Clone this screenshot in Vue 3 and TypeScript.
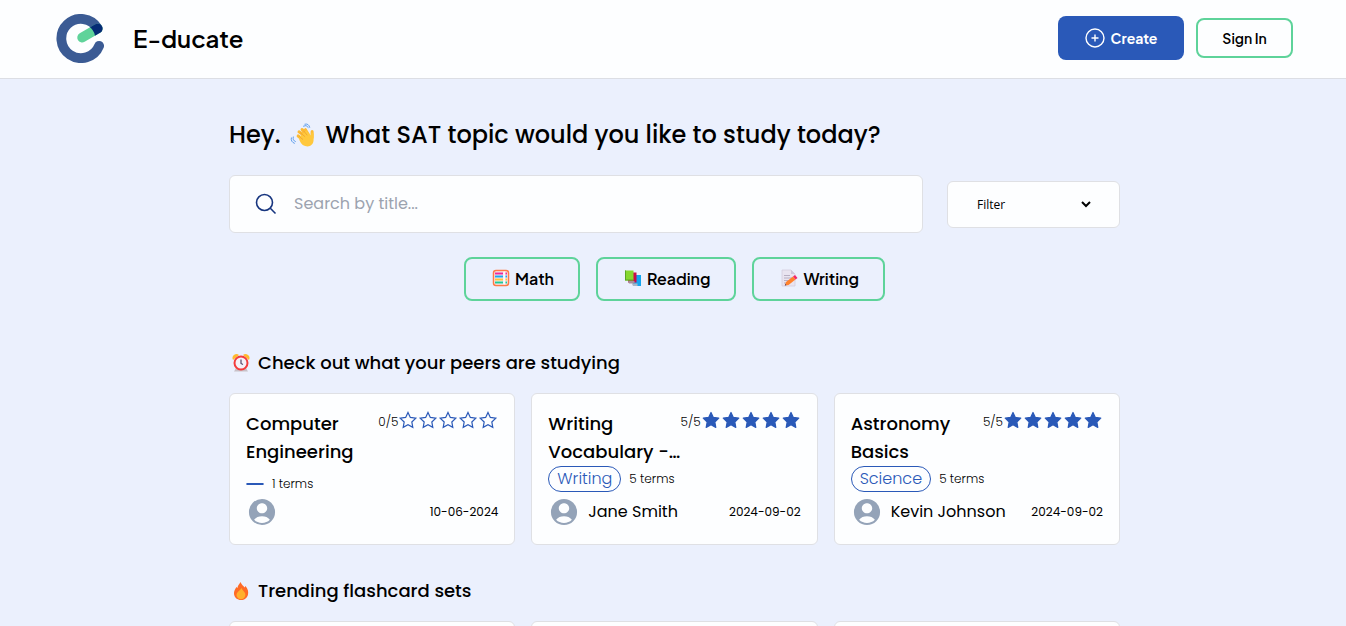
<script setup lang="ts">
import { ref } from 'vue'

interface StudySet {
  title: string
  rating: number
  subject: string
  terms: number
  author: string
  date: string
}

const query = ref('')
const filter = ref('Filter')
const topics = ['Math', 'Reading', 'Writing']

const peerSets: StudySet[] = [
  { title: 'Computer\nEngineering', rating: 0, subject: '', terms: 1, author: '', date: '10-06-2024' },
  { title: 'Writing\nVocabulary -…', rating: 5, subject: 'Writing', terms: 5, author: 'Jane Smith', date: '2024-09-02' },
  { title: 'Astronomy\nBasics', rating: 5, subject: 'Science', terms: 5, author: 'Kevin Johnson', date: '2024-09-02' },
]
</script>

<template>
  <div class="page">
    <header class="header">
      <a class="brand" href="#">
        <svg class="logo" viewBox="0 0 50 50" aria-hidden="true">
          <defs>
            <clipPath id="ring-area">
              <path clip-rule="evenodd" d="M0 0H50V50H0ZM25 10a15 15 0 1 0 0 30a15 15 0 1 0 0-30Z" />
            </clipPath>
          </defs>
          <path d="M42.500 14.500A20 20 0 1 0 44 32.500" fill="none" stroke="#3b5b94" stroke-width="10" stroke-linecap="round" />
          <path d="M26.700 24L42.500 14.900" stroke="#5fd39a" stroke-width="10" stroke-linecap="round" />
          <path d="M26.700 24L42.500 14.900" stroke="#052b75" stroke-width="10" stroke-linecap="round" clip-path="url(#ring-area)" />
        </svg>
        <span>E-ducate</span>
      </a>
      <nav class="actions">
        <button class="create" type="button">
          <svg viewBox="0 0 20 20" aria-hidden="true">
            <circle cx="10" cy="10" r="9" />
            <path d="M10 6.500v7M6.500 10h7" />
          </svg>
          Create
        </button>
        <button class="sign-in" type="button">Sign In</button>
      </nav>
    </header>

    <main class="main">
      <h1 class="greeting">
        <span>Hey.</span>
        <svg viewBox="0 0 26 26" aria-hidden="true">
          <g fill="none" stroke="#5b9bea" stroke-width="1" stroke-linecap="round">
            <path d="M14 3.200q3-2 5 1.300M15.500 1.200q4-1 5 3.300M3.400 14.500q-1 3.600 2.200 4.800M1.400 15.500q-1 4 3.200 5.600" />
          </g>
          <g stroke="#fdbb35" stroke-width="3.200" stroke-linecap="round">
            <path d="M16 14L9.400 9.200M17 12L12.600 6.800M19 12L16 7M13 17L8.500 13.500M23 15V9" />
          </g>
          <path d="M9 15L17 7.500l4.500 5.400 1-3.500 2 1.400v7.500c-.4 4.700-4.500 7.300-8.800 5.700-3.600-1.200-5.700-4.500-6.700-9Z" fill="#ffc83d" />
          <path d="M10.500 10l5.200 4.300M14 8l4 4.800M9.500 14l4 3.200" stroke="#e8982b" stroke-width=".7" />
        </svg>
        <span>What SAT topic would you like to study today?</span>
      </h1>

      <form class="search-row" @submit.prevent>
        <label class="search">
          <svg viewBox="0 0 22 22" aria-hidden="true">
            <circle cx="9.500" cy="9.500" r="8" />
            <path d="M15.300 15.300L20.500 20.500" />
          </svg>
          <input v-model="query" type="text" placeholder="Search by title..." aria-label="Search by title" />
        </label>
        <label class="filter">
          <select v-model="filter" aria-label="Filter">
            <option>Filter</option>
            <option>Math</option>
            <option>Reading</option>
            <option>Writing</option>
          </select>
          <svg viewBox="0 0 10 10" aria-hidden="true"><path d="M1 3l4 4 4-4" /></svg>
        </label>
      </form>

      <div class="topics">
        <button v-for="topic in topics" :key="topic" type="button">
          <svg v-if="topic === 'Math'" viewBox="0 0 18 18" aria-hidden="true">
            <rect x="1.500" y="1.500" width="15" height="15" rx="2.500" fill="#f5edf3" stroke="#ff7a45" stroke-width="1.500" />
            <g stroke-width="2">
              <path d="M3 4.500h8M13.500 4.500h1.500" stroke="#ed2a9a" />
              <path d="M3 7.500h8M13.500 7.500h1.500" stroke="#1ca7ee" />
              <path d="M3 10.500h8M13.500 10.500h1.500" stroke="#ffc43a" />
              <path d="M3 13.500h8M13.500 13.500h1.500" stroke="#20c997" />
            </g>
            <path d="M12.200 2.500v13" stroke="#fff" stroke-width="1" />
          </svg>
          <svg v-else-if="topic === 'Reading'" viewBox="0 0 18 18" aria-hidden="true">
            <path d="M8 6h9v11H9z" fill="#12a5ef" />
            <path d="M8 14.500h5.500V17H9z" fill="#a7b6c7" />
            <path d="M4 3.500h8.500v10H4z" fill="#ca0b4a" />
            <path d="M4 12h6.500v2.500H5z" fill="#a58f9c" />
            <path d="M1 1.500h8.500v10H1z" fill="#86d72f" />
            <path d="M1 1.500h1v10H1zM1 10.500h8.500v1H1z" fill="#5aa524" />
          </svg>
          <svg v-else viewBox="0 0 18 18" aria-hidden="true">
            <path d="M2 1h9l4 4v12H2z" fill="#e9e4f0" stroke="#d3cddd" stroke-width=".8" />
            <path d="M11 1v4h4" fill="#cec7da" />
            <path d="M4 6.500h6M4 9h8M4 11.500h5M4 14h3" stroke="#aaa1b7" stroke-width=".8" />
            <path d="M6 13L13 7.500l2.500 3L8.500 16 4.800 16.500Z" fill="#ff822d" />
            <path d="M13 7.500l2-1.500 2.500 3-2 1.500Z" fill="#f52768" />
            <path d="M4.800 16.500l.6-1.700 1 1.500Z" fill="#433b6b" />
          </svg>
          {{ topic }}
        </button>
      </div>

      <section class="section">
        <h2>
          <svg viewBox="0 0 20 20" aria-hidden="true">
            <path d="M5 15l-2 3.500h14L15 15z" fill="#c8c1c8" />
            <path d="M2 7a4 4 0 0 1 6-5zM18 7a4 4 0 0 0-6-5z" fill="#ffb92e" />
            <circle cx="10" cy="10" r="6.500" fill="#f5f1f8" stroke="#f43c3c" stroke-width="2" />
            <path d="M10 6.500V10.500l2 1" fill="none" stroke="#52496b" stroke-width="1.200" />
          </svg>
          Check out what your peers are studying
        </h2>
        <div class="cards">
          <article v-for="item in peerSets" :key="item.title" class="card">
            <div class="card-head">
              <h3>{{ item.title }}</h3>
              <div class="rating">
                <span>{{ item.rating }}/5</span>
                <svg v-for="n in 5" :key="n" :class="{ full: n <= item.rating }" viewBox="-0.6 -0.6 25.2 25.2" aria-hidden="true">
                  <path d="M12 2.500l2.950 6.300 6.850.9-5 4.750 1.250 6.850L12 18l-6.050 3.300 1.250-6.850-5-4.750 6.850-.9Z" />
                </svg>
              </div>
            </div>
            <div class="meta" :class="{ untagged: !item.subject }">
              <span class="tag">{{ item.subject }}</span>
              <span class="terms">{{ item.terms }} terms</span>
            </div>
            <div class="author">
              <svg viewBox="0 0 24 24" aria-hidden="true">
                <path d="M12 2.200a9.800 9.800 0 1 0 0 19.600a9.800 9.800 0 1 0 0-19.600zm0 3.200c2.150 0 3.900 1.700 3.900 3.800S14.150 13 12 13s-3.900-1.700-3.900-3.800S9.850 5.400 12 5.400zm0 14.800c-2.300 0-4.400-.7-5.900-2.300C7.500 16 9.500 15.200 12 15.200s4.500.8 5.900 2.700C16.400 19.500 14.300 20.200 12 20.200z" fill-rule="evenodd" />
              </svg>
              <span class="name">{{ item.author }}</span>
              <time>{{ item.date }}</time>
            </div>
          </article>
        </div>
      </section>

      <section class="section">
        <h2>
          <svg viewBox="0 0 20 20" aria-hidden="true">
            <path d="M9.500 1c1 3 3 3.500 4 5.500l1-1.500c2.500 3 3 5.500 2.500 8.500-.7 3.500-3.500 5.500-7 5.500s-6.600-2.300-7-6c-.3-3 1.200-5 2.500-7l1 1C6.800 4.500 8 3.500 9.500 1Z" fill="#ff6b26" />
            <path d="M10.500 7c.5 2 2.500 3 3.500 5 1.300 3-.8 6.200-4 6.200s-5.200-3-4.200-5.700C6.800 10 9.500 9.500 10.500 7Z" fill="#ffb02e" />
          </svg>
          Trending flashcard sets
        </h2>
        <div class="cards">
          <article v-for="n in 3" :key="n" class="card"></article>
        </div>
      </section>
    </main>
  </div>
</template>

<style>
body {
  margin: 0;
  background: #ebf0fd;
}
</style>

<style scoped>
* {
  box-sizing: border-box;
}

.page {
  height: 100vh;
  overflow: hidden;
  color: #000;
  background: #ebf0fd;
  font-family: Poppins, Inter, "Open Sans", sans-serif;
}

svg {
  display: block;
  flex: none;
}

button,
input,
select {
  font-family: inherit;
  color: inherit;
}

.header {
  display: flex;
  align-items: center;
  justify-content: space-between;
  height: 79px;
  padding: 0 53px 2px 56px;
  border-bottom: 1px solid #dcdee4;
  background: #fdfeff;
}

.brand,
.actions button,
.topics button {
  font-family: "Plus Jakarta Sans", "DM Sans", Inter, sans-serif;
}

.brand {
  display: flex;
  align-items: center;
  gap: 28px;
  color: #000;
  font-size: 24px;
  font-weight: 600;
  text-decoration: none;
}

.logo {
  width: 49px;
  height: 49px;
}

.actions {
  display: flex;
  align-items: center;
  gap: 12px;
}

.actions button {
  display: flex;
  align-items: center;
  justify-content: center;
  border-radius: 8px;
  font-size: 14px;
}

.actions .create {
  gap: 6px;
  width: 126px;
  height: 44px;
  border: 0;
  background: #2a59b8;
  color: #fff;
  font-weight: 700;
}

.create svg {
  width: 20px;
  height: 20px;
  fill: none;
  stroke: #fff;
  stroke-width: 1.4;
}

.actions .sign-in {
  width: 97px;
  height: 40px;
  border: 2px solid #5ed39a;
  background: #fdfeff;
  font-weight: 600;
}

.main {
  padding: 40px 226px 0 229px;
}

.greeting {
  display: flex;
  align-items: center;
  gap: 10px;
  margin: 0 0 24px;
  font-size: 24px;
  font-weight: 500;
  line-height: 32px;
}

.greeting svg {
  width: 25px;
  height: 25px;
}

.search-row {
  display: flex;
  align-items: center;
  gap: 24px;
}

.search {
  display: flex;
  flex: 1;
  align-items: center;
  gap: 17px;
  height: 58px;
  padding: 0 25px;
  border: 1px solid #dfe0e4;
  border-radius: 6px;
  background: #fdfeff;
}

.search svg {
  width: 22px;
  height: 22px;
  fill: none;
  stroke: #17357f;
  stroke-width: 1.6;
}

.search input {
  flex: 1;
  min-width: 0;
  padding: 0 0 2px;
  border: 0;
  outline: 0;
  background: transparent;
  font-size: 16px;
}

.search input::placeholder {
  color: #9ca3af;
}

.filter {
  display: flex;
  align-items: center;
  width: 173px;
  height: 47px;
  padding: 0 28px 0 29px;
  border: 1px solid #dfe0e4;
  border-radius: 6px;
  background: #fdfeff;
}

.filter select {
  flex: 1;
  padding: 0;
  border: 0;
  outline: 0;
  appearance: none;
  background: transparent;
  font-family: "Open Sans", "Noto Sans", sans-serif;
  font-size: 12px;
}

.filter svg {
  width: 10px;
  height: 10px;
  fill: none;
  stroke: #000;
  stroke-width: 2;
}

.topics {
  display: flex;
  justify-content: center;
  gap: 16px;
  margin: 24px 0 48px;
}

.topics button {
  display: flex;
  align-items: center;
  gap: 5px;
  height: 44px;
  padding: 0 24px 2px 26px;
  border: 2px solid #5ed39a;
  border-radius: 8px;
  background: transparent;
  font-size: 16px;
  font-weight: 600;
}

.topics svg {
  width: 18px;
  height: 18px;
}

.section {
  margin-bottom: 32px;
}

.section h2 {
  display: flex;
  align-items: center;
  gap: 7px;
  margin: 0 0 16px;
  padding-left: 2px;
  font-size: 18px;
  font-weight: 500;
  line-height: 28px;
}

.section h2 svg {
  width: 20px;
  height: 20px;
}

.cards {
  display: grid;
  grid-template-columns: repeat(3, minmax(0, 1fr));
  gap: 16px;
}

.card {
  min-height: 152px;
  padding: 16px;
  border: 1px solid #dfe0e4;
  border-radius: 6px;
  background: #fdfeff;
}

.card-head {
  display: flex;
  align-items: flex-start;
  justify-content: space-between;
}

.card h3 {
  margin: 0;
  font-size: 18px;
  font-weight: 500;
  line-height: 28px;
  white-space: pre;
}

.rating {
  display: flex;
  font-size: 12px;
  font-weight: 300;
  line-height: 24px;
}

.rating svg {
  width: 20px;
  height: 20px;
  fill: none;
  stroke: #2a59b8;
  stroke-width: 1.5;
}

.rating .full {
  fill: #2a59b8;
  stroke-linejoin: round;
}

.meta {
  display: flex;
  align-items: center;
  gap: 8px;
  height: 30px;
  padding-bottom: 4px;
}

.meta.untagged {
  padding: 6px 0 0;
}

.tag {
  padding: 0 8px;
  border: 1px solid #2a59b8;
  border-radius: 13px;
  color: #2a59b8;
  font-size: 16px;
  font-weight: 300;
  line-height: 24px;
}

.terms {
  font-size: 12px;
  font-weight: 300;
}

.author {
  display: flex;
  align-items: center;
  gap: 8px;
  height: 32px;
}

.author svg {
  width: 32px;
  height: 32px;
  fill: #94a3b8;
}

.name {
  flex: 1;
  padding-bottom: 2px;
  font-size: 16px;
  white-space: nowrap;
}

time {
  font-size: 12px;
  white-space: nowrap;
}

@media (max-width: 1100px) {
  .main {
    padding-right: 32px;
    padding-left: 32px;
  }
}

@media (max-width: 800px) {
  .cards {
    grid-template-columns: minmax(0, 1fr);
  }
}
</style>
